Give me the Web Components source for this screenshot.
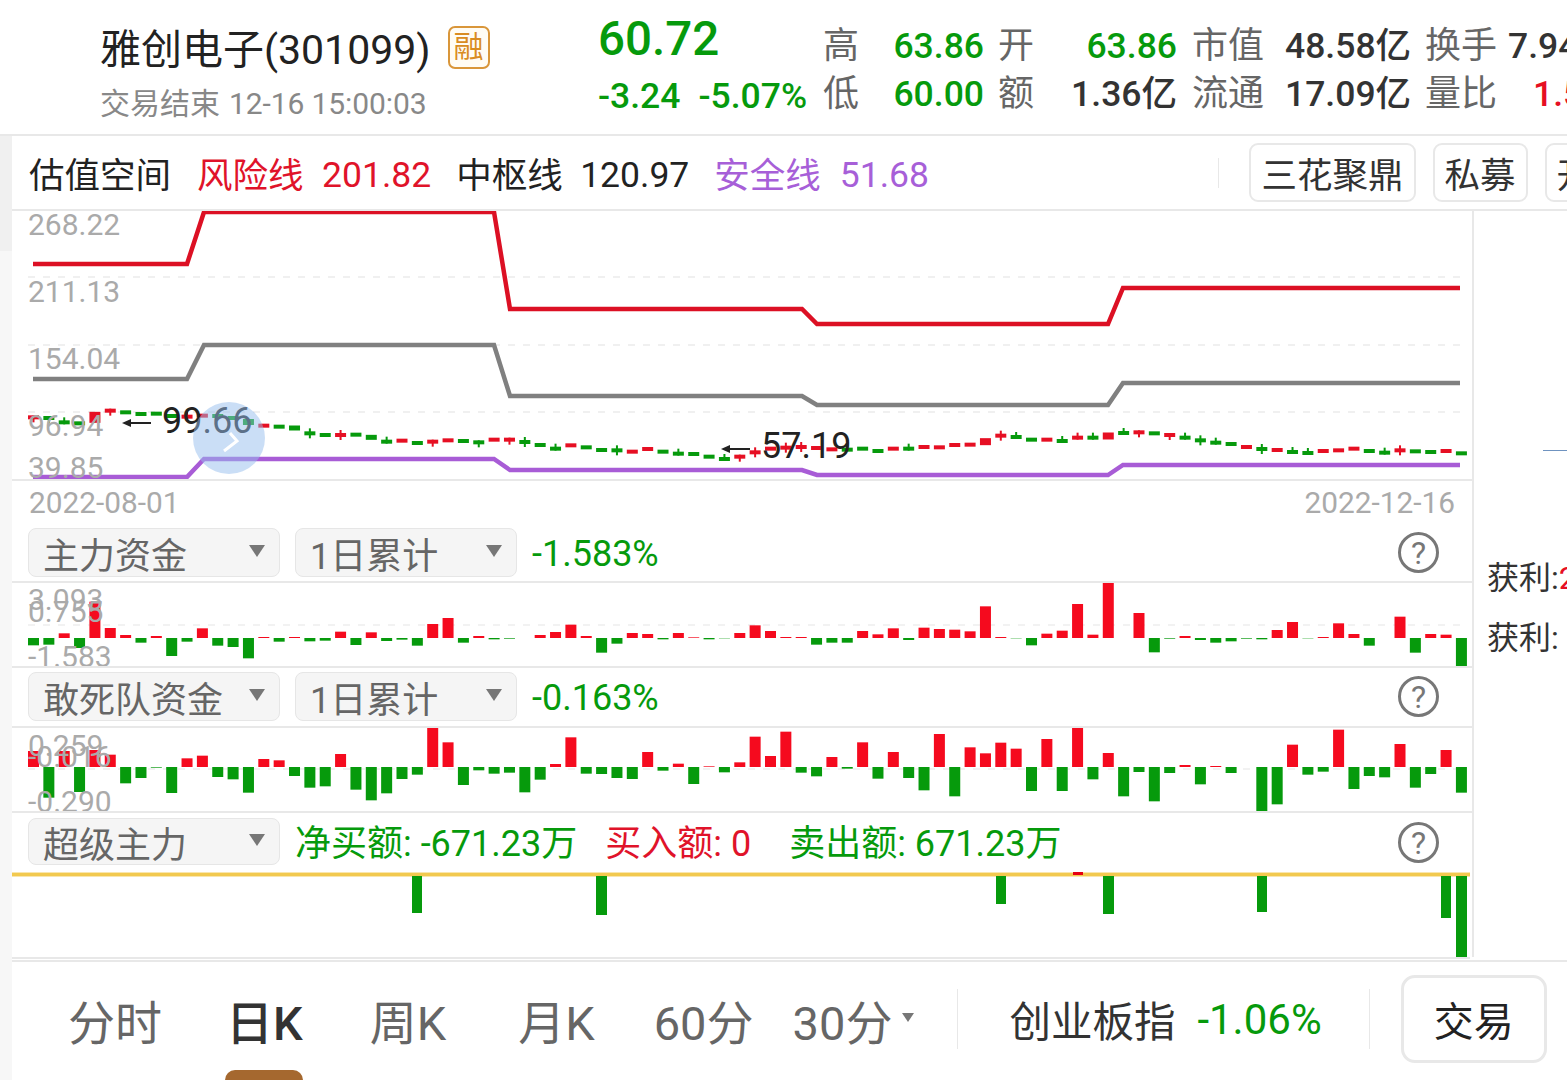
<!DOCTYPE html>
<html lang="zh"><head><meta charset="utf-8"><title>雅创电子</title>
<style>
html,body{margin:0;padding:0;background:#fff;overflow:hidden;width:1567px;height:1080px}
body{font-family:Roboto,"Noto Sans CJK SC",sans-serif;color:#333}
</style></head><body>
<template id="t-app"><style>
:host{display:block;width:1567px;height:1080px;overflow:hidden;background:#fff}
.body{display:grid;grid-template-columns:12px 1fr;height:944px}
.strip{background:linear-gradient(#f0f0f0 0 115px,#f7f7f7 115px)}
.cols{display:flex;flex-direction:column;min-width:0}
.mid{display:grid;grid-template-columns:1460px 1fr;height:748px}
.left{min-width:0;display:flex;flex-direction:column}
.side{border-left:2px solid #e8e8e8;height:746px;position:relative;overflow:hidden}
</style>
<slot name="head"></slot>
<div class="body"><div class="strip"></div><div class="cols"><slot name="tool"></slot>
<div class="mid"><div class="left"><slot></slot></div><div class="side"><slot name="side"></slot></div></div>
<slot name="tabs"></slot></div></div></template>

<template id="t-header"><style>
:host{display:grid;grid-template-columns:498px 227px 1fr;height:134px;border-bottom:2px solid #e8e8e8;padding-left:100px;box-sizing:content-box;overflow:hidden;width:1467px}
.name{display:flex;align-items:center;gap:17px;font-size:41px;color:#222;height:48px;margin-top:22px;white-space:nowrap}
.badge{width:38px;height:39px;border:2px solid #d9963a;border-radius:7px;background:#fffcf4;color:#d98c22;font-size:30px;display:flex;align-items:center;justify-content:center;margin-top:2px;line-height:1}
.sub{font-size:30px;color:#888;margin-top:16px;line-height:36px;white-space:nowrap}
.sub span{margin-left:9px;letter-spacing:-.1px}
.px{font-size:47.5px;font-weight:500;color:#069a0c;line-height:48px;margin-top:15px}
.ch{display:flex;gap:18px;font-size:35.5px;font-weight:500;color:#069a0c;line-height:48px;margin-top:9px}
.stats{display:grid;grid-template-columns:68px 105px 35px 159px 93px 140px 83px 116px;grid-auto-rows:48px;padding-top:21.5px;font-size:36px;line-height:48px;white-space:nowrap}
.l{color:#666}.v{font-weight:500;color:#333;font-size:35.5px}.g{color:#069a0c}.r{color:#e60f23}
.n{margin-left:-2px}
.e1{text-align:right;padding-right:14px}.e2{text-align:right;padding-right:15px}.e3{margin-left:25px}
</style>
<div><div class="name"><span>雅创电子(301099)</span><span class="badge">融</span></div><div class="sub">交易结束<span>12-16 15:00:03</span></div></div>
<div><div class="px">60.72</div><div class="ch"><span>-3.24</span><span>-5.07%</span></div></div>
<div class="stats">
<span class="l n">高</span><span class="v g e1">63.86</span><span class="l">开</span><span class="v g e2">63.86</span><span class="l">市值</span><span class="v">48.58亿</span><span class="l">换手</span><span class="v">7.94%</span>
<span class="l n">低</span><span class="v g e1">60.00</span><span class="l">额</span><span class="v e2">1.36亿</span><span class="l">流通</span><span class="v">17.09亿</span><span class="l">量比</span><span class="v r e3">1.58</span>
</div></template>

<template id="t-tool"><style>
:host{display:flex;align-items:center;height:73px;border-bottom:2px solid #e8e8e8;padding-left:17px;font-size:35.5px;white-space:nowrap;overflow:hidden;color:#222}
.r{color:#e0132a}.p{color:#a75fd8}
span{flex:none}
.d{margin-top:4px}
.div{width:1px;height:30px;background:#e8e8e8;margin-left:289.5px;flex:none}
.btns{display:flex;flex:none;margin-left:30px;gap:17px}
</style>
<span>估值空间</span><span class="r" style="margin-left:26px">风险线</span><span class="r d" style="margin-left:18.5px">201.82</span><span style="margin-left:25px">中枢线</span><span class="d" style="margin-left:17.5px">120.97</span><span class="p" style="margin-left:25px">安全线</span><span class="p d" style="margin-left:19px">51.68</span>
<span class="div"></span><div class="btns"><slot></slot></div></template>

<template id="t-btn"><style>
:host{display:flex;align-items:center;height:59px;padding:0 10px;border:2px solid #e8e8e8;border-radius:9px;font-size:35.5px;color:#333;flex:none;white-space:nowrap;box-sizing:border-box}
</style><slot></slot></template>

<template id="t-chart"><style>
:host{display:block;position:relative;border-bottom:2px solid #e8e8e8;overflow:hidden;height:268px}
svg{display:block;position:absolute;inset:0}
.lb{position:absolute;left:16px;font-size:30px;color:#aaa;line-height:34px;white-space:nowrap}
.note{position:absolute;font-size:36px;color:#222;line-height:40px;white-space:nowrap}
.dot{position:absolute;left:181px;top:191px;width:72px;height:72px;border-radius:50%;background:rgba(150,190,238,.5)}
</style><svg id="s" width="1460" height="270" viewBox="12 211 1460 270"></svg>
<div class="note" style="left:150px;top:190px">99.66</div>
<div class="note" style="left:749px;top:215px">57.19</div>
<div class="dot"></div>
<svg width="1460" height="270" viewBox="12 211 1460 270"><path d="M230 433L237 441L224 451" fill="none" stroke="#fff" stroke-width="3"/></svg>
<div class="lb" style="top:-3px">268.22</div><div class="lb" style="top:64px">211.13</div><div class="lb" style="top:131px">154.04</div><div class="lb" style="top:198px">96.94</div><div class="lb" style="top:240px">39.85</div>
</template>

<template id="t-date"><style>
:host{display:flex;justify-content:space-between;height:46px;padding:4px 17px 0 17px;box-sizing:border-box;font-size:29.8px;color:#aaa;line-height:36px}
</style><slot name="a"></slot><slot name="b"></slot></template>

<template id="t-select"><style>
:host{display:flex;align-items:center;justify-content:space-between;box-sizing:border-box;height:49px;background:#f5f5f5;border:1px solid #e6e6e6;border-radius:8px;padding:0 14px 0 14px;font-size:36px;color:#666;white-space:nowrap;flex:none}
i{width:0;height:0;border-left:8.5px solid transparent;border-right:8.5px solid transparent;border-top:12px solid #777;margin-top:-4px}
</style><slot></slot><i></i></template>

<template id="t-help"><style>
:host{display:flex;align-items:center;justify-content:center;width:41px;height:41px;box-sizing:border-box;border:3px solid #777;border-radius:50%;font-size:32px;color:#777;line-height:1;flex:none}
</style>?</template>

<template id="t-row"><style>
:host{display:flex;align-items:flex-start;box-sizing:border-box;padding-left:16px;padding-right:33px;border-bottom:2px solid #e8e8e8;font-size:36px;white-space:nowrap}
.sp{flex:1}
</style><slot></slot><span class="sp"></span><slot name="end"></slot></template>

<template id="t-bars"><style>
:host{display:block;position:relative;height:83px;border-bottom:2px solid #e8e8e8;overflow:hidden}
svg{display:block}
.lb{position:absolute;left:16px;font-size:30px;color:#aaa;line-height:30px;white-space:nowrap}
</style><svg id="s" width="1460" height="86"></svg></template>

<template id="t-super"><style>
:host{display:block;height:85px;overflow:hidden;border-bottom:2px solid #e8e8e8;width:1458px}
svg{display:block}
</style><svg width="1460" height="86" viewBox="12 872 1460 86">
<rect x="12" y="872" width="1458" height="5" fill="#f9e6ae"/><rect x="12" y="873" width="1458" height="3" fill="#f2c94f"/>
<g fill="#069a0c"><rect x="412" y="876" width="10" height="37"/><rect x="596" y="876" width="11" height="39"/><rect x="996" y="876" width="10" height="28"/><rect x="1103" y="876" width="11" height="38"/><rect x="1257" y="876" width="10" height="36"/><rect x="1441" y="876" width="10" height="42"/><rect x="1456" y="876" width="11" height="81"/></g>
<rect x="1073" y="872" width="10" height="3" fill="#e60012"/></svg></template>

<template id="t-tabs"><style>
:host{display:flex;align-items:center;position:relative;height:120px;border-top:2px solid #e8e8e8;margin-top:1px;padding-bottom:4px;box-sizing:border-box;font-size:47px;color:#666;white-space:nowrap}
span{flex:none}
.a{color:#333;font-weight:500}
.tri{width:0;height:0;border-left:6.5px solid transparent;border-right:6.5px solid transparent;border-top:9px solid #777;margin-left:10px;margin-top:-4px}
.d{width:1px;height:60px;background:#e8e8e8;flex:none}
.u{position:absolute;left:213px;bottom:0;width:78px;height:10px;background:#a5682f;border-radius:10px 10px 0 0}
.idx{font-size:41.5px;color:#333;margin-left:51px}
.pct{font-size:42px;color:#069a0c;margin-left:22px}
.tr{flex:none;margin-left:31px;width:146px;height:88px;box-sizing:border-box;border:3px solid #e8e8e8;border-radius:14px;display:flex;align-items:center;justify-content:center;font-size:40px;color:#222}
</style>
<span style="margin-left:56px">分时</span><span class="a" style="margin-left:64px">日K</span><span style="margin-left:67px">周K</span><span style="margin-left:72px">月K</span><span style="margin-left:59px">60分</span><span style="margin-left:39px">30分</span><span class="tri"></span><span class="d" style="margin-left:43px"></span><span class="idx">创业板指</span><span class="pct">-1.06%</span><span class="d" style="margin-left:47px"></span><span class="tr">交易</span><span class="u"></span></template>

<template id="t-side"><style>
:host{display:block;font-size:32px;color:#333;white-space:nowrap}
div{position:absolute;left:13px;line-height:40px}
b{font-weight:400;color:#e60f23}
.blue{left:69px;top:239px;width:30px;height:1px;background:#6f93c0}
</style><div class="blue"></div><div style="top:347px">获利:<b>2</b></div><div style="top:407px">获利:</div></template>

<stock-app>
<stock-header slot="head"></stock-header>
<val-toolbar slot="tool"><tool-btn>三花聚鼎</tool-btn><tool-btn>私募</tool-btn><tool-btn>开通</tool-btn></val-toolbar>
<val-chart></val-chart>
<date-row><span slot="a">2022-08-01</span><span slot="b">2022-12-16</span></date-row>
<ind-row style="height:56px;padding-top:1px;gap:15px">
<ind-select style="width:252px">主力资金</ind-select><ind-select style="width:222px">1日累计</ind-select><span style="color:#069a0c;line-height:52px">-1.583%</span><help-mark slot="end" style="margin-top:4px"></help-mark>
</ind-row>
<bar-chart data-kind="1"></bar-chart>
<ind-row style="height:60px;padding-top:4px;gap:15px">
<ind-select style="width:252px">敢死队资金</ind-select><ind-select style="width:222px">1日累计</ind-select><span style="color:#069a0c;line-height:52px">-0.163%</span><help-mark slot="end" style="margin-top:4px"></help-mark>
</ind-row>
<bar-chart data-kind="2"></bar-chart>
<ind-row style="height:59px;padding-top:5px;border-bottom:0;gap:0">
<ind-select style="width:252px;height:47px">超级主力</ind-select><span style="color:#069a0c;line-height:52px;margin-left:15px">净买额: -671.23万</span><span style="color:#e0132a;line-height:52px;margin-left:28px">买入额: 0</span><span style="color:#069a0c;line-height:52px;margin-left:38px">卖出额: 671.23万</span><help-mark slot="end" style="margin-top:4px"></help-mark>
</ind-row>
<super-chart></super-chart>
<side-panel slot="side"></side-panel>
<tab-bar slot="tabs"></tab-bar>
</stock-app>
<script>
const NS='http://www.w3.org/2000/svg';
function tag(p,n,a){const e=document.createElementNS(NS,n);for(const k in a)e.setAttribute(k,a[k]);p.appendChild(e);return e}
function base(id,after){return class extends HTMLElement{constructor(){super();const r=this.attachShadow({mode:'open'});r.appendChild(document.getElementById(id).content.cloneNode(true));if(after)after.call(this,r)}}}
const XS=i=>33.5+i*15.354;
const CAND='r82d g84d g97u g100 r82b11 r62d g67 g72 g71 g78 r80x r77 g78 g84 g96b6 r107 g110 g114b5 g130x g135 r135x g134 g142b5 g155u r152 g159 r155d r151 g153 g157d r149 r149d g156x g165 g176u r166 g172 g180 g181x r185 r177 g185 g191u g192 g200 g207u r200d r187x '+
'r176 r173x r171x r174 r178 g179 g176 g183 r176 g176u r171 r172 r165 r164 r155b7 r137x g141u g149 r149 g153u r143u g143u r138b7 g129u r127d g130 r135d g143u g151x g158u g162 r171 g177x r180 g186u g189u r183 r181 r176 g183 g188u r181x g184 g186 r183 g190';
const B1=[-11,-10,7,-15,54.5,15,4.5,-7,3,-27,-5.5,14.5,-11.5,-13.5,-30.5,1.5,-5.5,1.5,-5,-4,9.5,-10.5,8.5,-4.5,-2.5,-11.5,21,30,-7,3,-2,-1,0,4.5,9,20,3,-22,-8.5,7.5,6,-2,7.5,1,-2,-.5,7.5,19,10.5,
1.5,1.5,-10,-7,-7,10.5,5.5,14.5,-3,15.5,13.5,12.5,10,47.5,1.5,-.5,-11,6.5,11,51,5,85,0,37.5,-21.5,-1,3,-3,-7,-5,-1,-2,12,24,-.5,1.5,22,6,-11.5,0,32,-22,6,5,-43.5].map(v=>v*2/3);
const B2=[48,-92,48,-75,51,37,-49,-33,-2,-78,26,34,-30,-37,-77,24,20,-27,-62,-58,39,-68,-100,-79,-36,-23,118,74,-54,-10,-20,-17,-76,-38,9,89,-20,-21,-33,-36,45,-11,10,-51,2,-16,14,91,33,
106,-17,-28,30,-5,74,-35,45,-33,-70,99,-88,59,41,73,55,-72,84,-72,120,-37,42,-88,-15,-103,-18,6,-52,3,-18,0,-135,-112,67,-23,-14,112,-66,-27,-31,69,-62,-21,51,-77].map(v=>v/3);
customElements.define('stock-app',base('t-app'));
customElements.define('stock-header',base('t-header'));
customElements.define('val-toolbar',base('t-tool'));
customElements.define('tool-btn',base('t-btn'));
customElements.define('date-row',base('t-date'));
customElements.define('ind-select',base('t-select'));
customElements.define('help-mark',base('t-help'));
customElements.define('ind-row',base('t-row'));
customElements.define('super-chart',base('t-super'));
customElements.define('tab-bar',base('t-tabs'));
customElements.define('side-panel',base('t-side'));
customElements.define('val-chart',base('t-chart',function(r){
 const s=r.getElementById('s');
 for(const y of [277,345,412])tag(s,'line',{x1:28,x2:1468,y1:y,y2:y,stroke:'#ececec','stroke-width':1.5,'stroke-dasharray':'7 8'});
 const X=[33,187,204,494,510,802,817,1108,1123,1460];
 const L=[['#dc1024',[264,264,212,212,309,309,324,324,288,288]],['#808080',[379,379,345,345,396,396,405,405,383,383]],['#a85cd6',[477,477,459,459,470,470,475,475,465,465]]];
 for(const [c,ys] of L)tag(s,'polyline',{points:X.map((x,i)=>x+','+ys[i]).join(' '),fill:'none',stroke:c,'stroke-width':4.5});
 CAND.trim().split(/\s+/).forEach((t,i)=>{
  const m=t.match(/([rg])(\d+)([udx])?(?:b(\d+))?/),c=m[1]=='r'?'#e60f23':'#069a0c',y=390+m[2]/3,h=+(m[4]||4),x=XS(i);
  const w=m[3];let up=0,dn=0;if(w=='u'||w=='x')up=3;if(w=='d'||w=='x')dn=3;
  if(up||dn)tag(s,'rect',{x:x-1,y:y-h/2-up,width:2,height:h+up+dn,fill:c});
  tag(s,'rect',{x:x-5.5,y:y-h/2,width:11,height:h,fill:c});
 });
 tag(s,'path',{d:'M122 423l9-4v3h20v2h-20v3z',fill:'#222'});
 tag(s,'path',{d:'M721 449l9-4v3h20v2h-20v3z',fill:'#222'});
}));
customElements.define('bar-chart',base('t-bars',function(r){
 const s=r.getElementById('s');const one=this.dataset.kind=='1';
 const top=one?583:728,zero=one?638:767,data=one?B1:B2,g=one?625:769;
 s.setAttribute('viewBox','12 '+top+' 1460 86');
 tag(s,'line',{x1:28,x2:1468,y1:g,y2:g,stroke:'#eee','stroke-width':1.5,'stroke-dasharray':'7 8'});
 data.forEach((v,i)=>{if(!v)return;const h=Math.abs(v);tag(s,'rect',{x:XS(i)-5.5,y:v>0?zero-h:zero,width:11,height:h,fill:v>0?'#f50a1e':'#069a0c'})});
 const lbs=one?[['3.093',600],['0.755',612],['-1.583',657]]:[['0.259',746],['-0.016',757],['-0.290',802]];
 for(const [t,y] of lbs){const d=document.createElement('div');d.className='lb';d.textContent=t;d.style.top=(y-top-15)+'px';r.appendChild(d)}
}));
</script></body></html>
